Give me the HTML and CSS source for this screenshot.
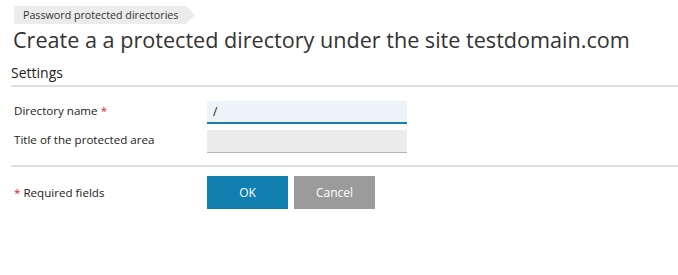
FILE: index.html
```html
<!DOCTYPE html>
<html lang="en">
<head>
    <meta charset="UTF-8">
    <meta name="viewport" content="width=device-width, initial-scale=1.0">
    <title>Password protected directories</title>
    <link rel="stylesheet" href="styles.css">
</head>
<body>
    <div class="page">
        <div class="breadcrumbs">
            <a class="crumb" href="#">Password protected directories</a>
        </div>
        <h1>Create a a protected directory under the site testdomain.com</h1>

        <form class="form">
            <h2 class="section-title">Settings</h2>

            <div class="row">
                <label for="dir-name">Directory name <span class="required">*</span></label>
                <input type="text" id="dir-name" class="field field-active" value="/">
            </div>
            <div class="row">
                <label for="area-title">Title of the protected area</label>
                <input type="text" id="area-title" class="field">
            </div>

            <div class="actions">
                <div class="note"><span class="required">*</span> Required fields</div>
                <div class="buttons">
                    <button type="submit" class="btn btn-primary">OK</button>
                    <button type="button" class="btn btn-cancel">Cancel</button>
                </div>
            </div>
        </form>
    </div>
</body>
</html>
```

FILE: styles.css
```css
body {
    font-family: 'Open Sans', 'Noto Sans', sans-serif;
    color: #222;
    background: #fff;
    margin: 0;
    padding: 0;
}

.page {
    padding: 6px 0 0 11px;
}

.breadcrumbs {
    display: flex;
    padding-left: 3px;
}

.crumb {
    position: relative;
    display: block;
    height: 18px;
    line-height: 18px;
    padding: 0 8px 0 9px;
    background: #ececec;
    color: #333;
    font-size: 10.7px;
    text-decoration: none;
}

.crumb::after {
    content: '';
    position: absolute;
    top: 0;
    right: -9px;
    border-top: 9px solid transparent;
    border-bottom: 9px solid transparent;
    border-left: 9px solid #ececec;
}

h1 {
    margin: 2px 0 0 2px;
    font-size: 21.6px;
    font-weight: normal;
    line-height: 28px;
    color: #333;
}

.section-title {
    margin: 9px 0 0 0;
    padding-bottom: 3px;
    font-size: 14px;
    font-weight: normal;
    line-height: 19px;
    color: #222;
    border-bottom: 2px solid #e0e0e0;
}

.row {
    display: flex;
    align-items: flex-start;
}

.row:first-of-type {
    margin-top: 14px;
}

.row + .row {
    margin-top: 6px;
}

label {
    width: 193px;
    padding: 2px 0 0 3px;
    font-size: 11.6px;
    line-height: 16px;
    color: #222;
}

.required {
    color: #e0201e;
}

.field {
    box-sizing: border-box;
    width: 200px;
    height: 23px;
    padding: 0 6px;
    border: none;
    border-bottom: 1px solid #b5b5b5;
    background: #ececec;
    font-family: inherit;
    font-size: 12px;
    color: #222;
}

.field-active {
    background: #edf4f8;
    border-bottom: 2px solid #1a7eb0;
    outline: none;
}

.actions {
    display: flex;
    align-items: center;
    margin-top: 12px;
    padding-top: 9px;
    border-top: 2px solid #e0e0e0;
}

.note {
    width: 193px;
    padding-left: 3px;
    font-size: 11.6px;
}

.buttons {
    display: flex;
    gap: 6px;
}

.btn {
    width: 81px;
    height: 33px;
    border: none;
    font-family: inherit;
    font-size: 12px;
    color: #fff;
    cursor: pointer;
}

.btn-primary {
    background: #117fb0;
}

.btn-cancel {
    background: #9b9b9b;
}
```
